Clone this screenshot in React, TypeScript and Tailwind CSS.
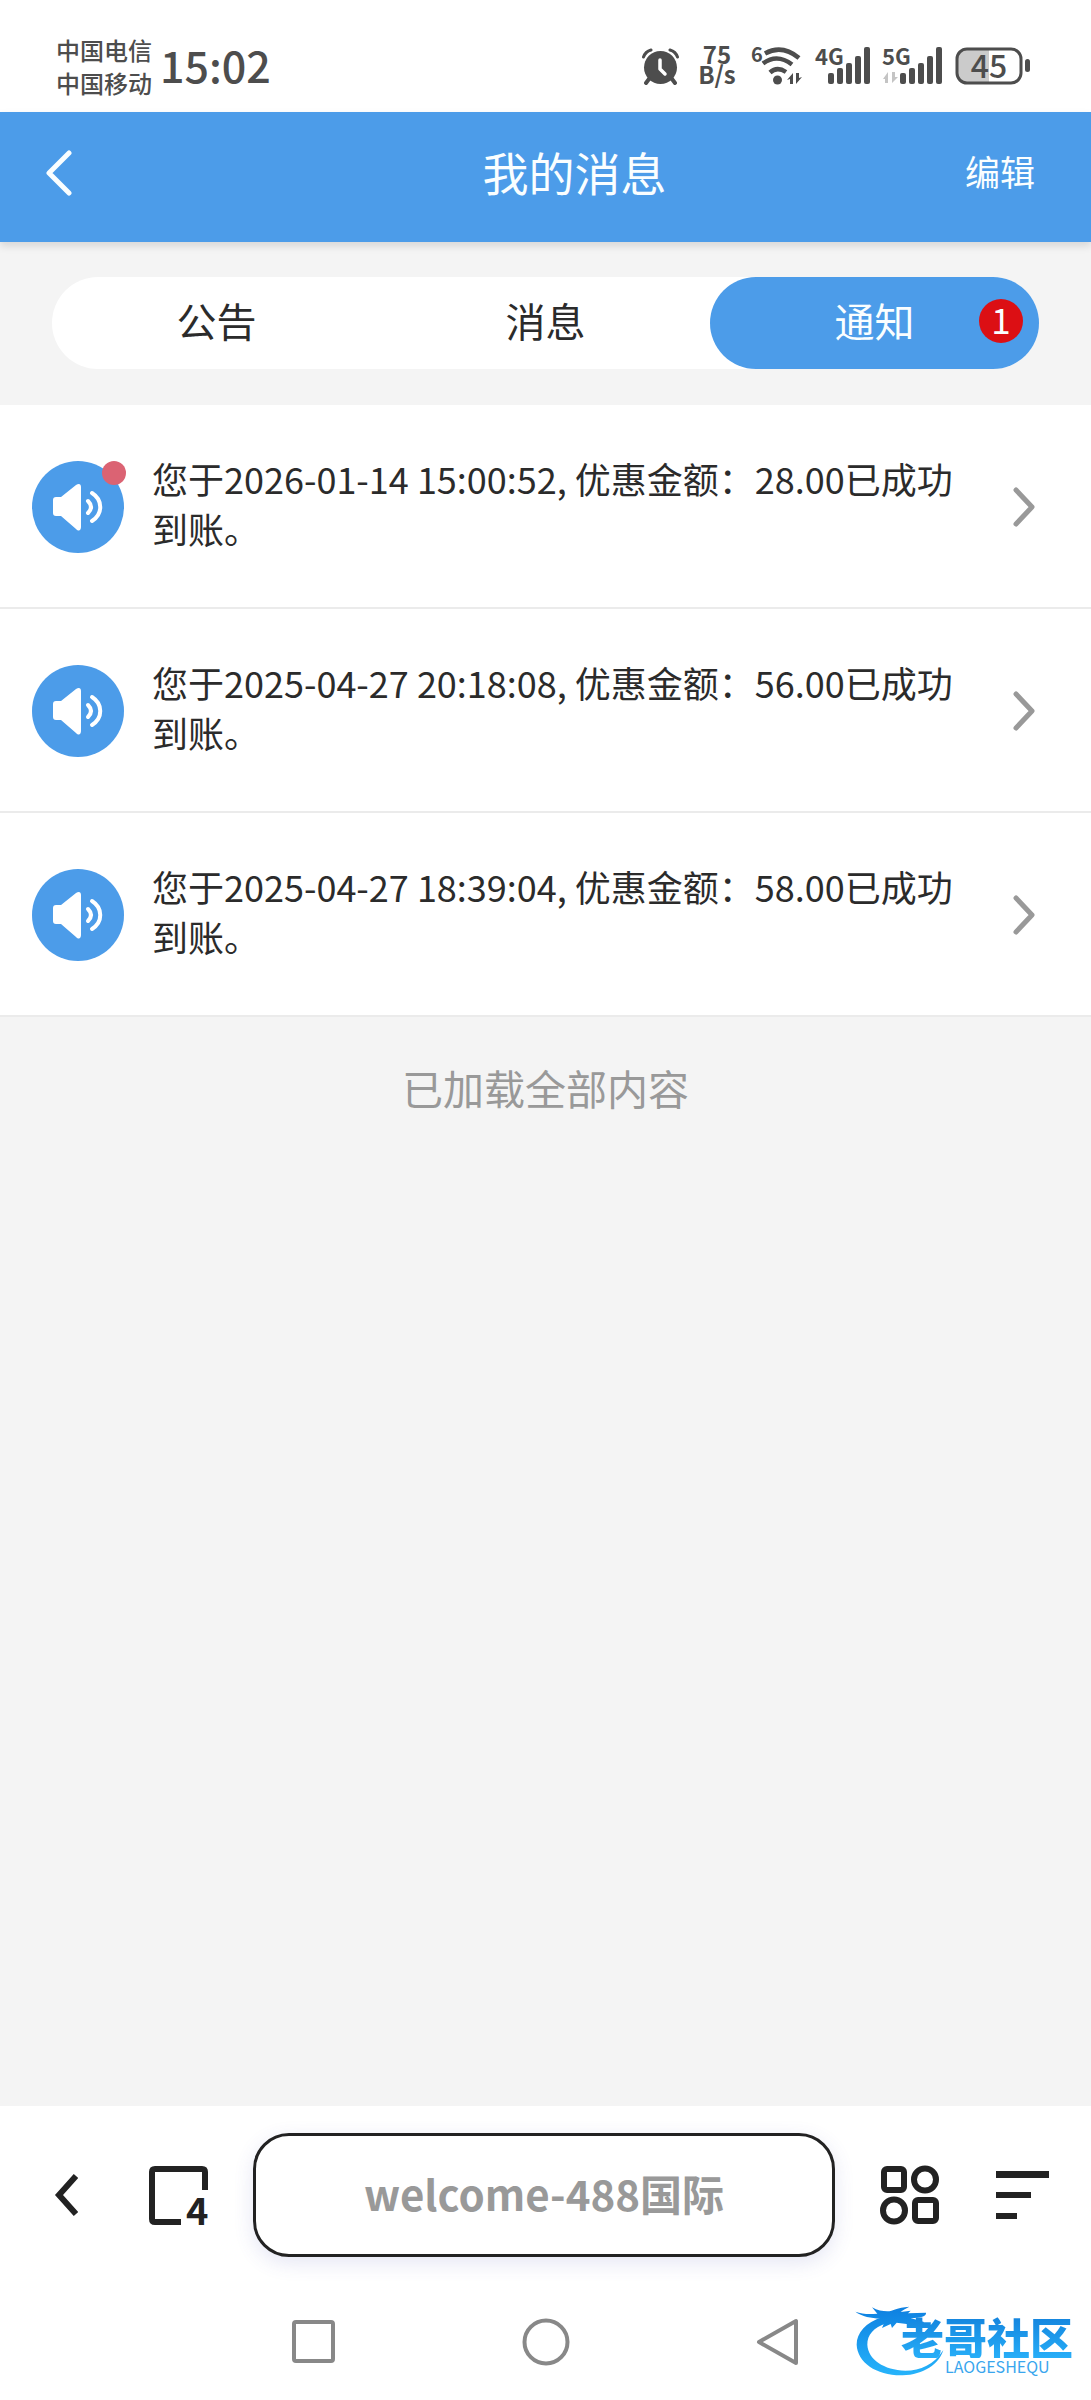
import React from "react";

const BARS = [
  { x: 0, h: 11 },
  { x: 9, h: 16 },
  { x: 18, h: 21 },
  { x: 27, h: 28 },
  { x: 36, h: 37 },
];

const MESSAGES = [
  { id: 1, time: "2026-01-14 15:00:52", amount: "28.00", unread: true },
  { id: 2, time: "2025-04-27 20:18:08", amount: "56.00", unread: false },
  { id: 3, time: "2025-04-27 18:39:04", amount: "58.00", unread: false },
];

const TABS = [
  { label: "公告", count: 0 },
  { label: "消息", count: 0 },
  { label: "通知", count: 1 },
];

function AlarmIcon() {
  return (
    <svg width="37" height="37" viewBox="0 0 37 37" fill="none" aria-hidden="true">
      <circle cx="18.500" cy="19.500" r="16.500" fill="#4d4d4d" />
      <path d="M1.500 9A11 11 0 0 1 9 2M35.500 9A11 11 0 0 0 28 2" stroke="#4d4d4d" strokeWidth="3" strokeLinecap="round" />
      <path d="M7 31l-3 4M30 31l3 4" stroke="#4d4d4d" strokeWidth="4" strokeLinecap="round" />
      <path d="M18 12v9l5 5" stroke="#fff" strokeWidth="3.500" strokeLinecap="round" strokeLinejoin="round" />
    </svg>
  );
}

function WifiIcon() {
  return (
    <svg width="52" height="40" viewBox="0 0 52 40" fill="none" className="overflow-visible" aria-hidden="true">
      <text x="0" y="16" fontSize="20" fontWeight="700" fill="#4d4d4d">6</text>
      <g stroke="#4d4d4d" strokeWidth="4.500">
        <path d="M14 7.500Q31 -2 48 12" />
        <path d="M12 17.500Q26 7 41 18.500" />
        <path d="M19 26.500Q26 20 35 26" />
      </g>
      <circle cx="26.500" cy="34" r="4.500" fill="#4d4d4d" />
      <path d="M36 34l6-7v11h-3v-5zM51 31l-6 7V27h3v5z" fill="#4d4d4d" />
    </svg>
  );
}

function SignalIcon({ label, idle }: { label: string; idle: boolean }) {
  const left = idle ? 18 : 13;
  return (
    <svg width={left + 43} height="40" viewBox={`0 0 ${left + 43} 40`} className="overflow-visible" aria-hidden="true">
      <text x="0" y="19" fontSize="22" fontWeight="700" fill="#4d4d4d">{label}</text>
      {idle && <path d="M1 33l5-7v11h-3v-4zM16 31l-6 6V26h3v5z" fill="#c4c4c4" />}
      {BARS.map((b) => (
        <rect key={b.x} x={left + b.x} y={38 - b.h} width="6" height={b.h} rx="2" fill="#4d4d4d" />
      ))}
    </svg>
  );
}

function BatteryIcon() {
  return (
    <svg width="76" height="38" viewBox="0 0 76 38" className="overflow-visible" aria-hidden="true">
      <path d="M12 2H34V36H12A10 10 0 0 1 2 26V12A10 10 0 0 1 12 2Z" fill="#cbcbcb" />
      <rect x="2" y="2" width="64" height="34" rx="10" fill="none" stroke="#4d4d4d" strokeWidth="3" />
      <rect x="70" y="12" width="5" height="13" rx="2.500" fill="#4d4d4d" />
      <text x="34" y="31" fontSize="32" fontWeight="500" textAnchor="middle" fill="#4d4d4d">45</text>
    </svg>
  );
}

function SpeakerIcon() {
  return (
    <svg width="92" height="92" viewBox="0 0 92 92" fill="none" aria-hidden="true">
      <circle cx="46" cy="46" r="46" fill="#4c9ce9" />
      <path d="M24 36h5L44 24c3-2 5-1 5 2v40c0 3-2 5-5 2L29 55h-5c-2 0-3-1-3-3V39c0-2 1-3 3-3Z" fill="#fff" />
      <path d="M56 40q6 6 0 12" stroke="#fff" strokeWidth="4" strokeLinecap="round" />
      <path d="M60 32c11 7 11 21 0 28" stroke="#fff" strokeWidth="4" strokeLinecap="round" />
    </svg>
  );
}

function DragonLogo() {
  return (
    <svg width="90" height="72" viewBox="9 10 270 216" fill="none" aria-hidden="true">
      <defs>
        <linearGradient id="dragon" x1="0" y1="10" x2="0" y2="220" gradientUnits="userSpaceOnUse">
          <stop stopColor="#0d7fe0" />
          <stop offset="1" stopColor="#27b4fb" />
        </linearGradient>
      </defs>
      <g fill="url(#dragon)">
        <path d="M92 44C40 58 14 92 14 126C16 180 76 220 152 218C214 216 262 184 274 142C246 186 206 204 160 204C96 202 48 170 46 126C46 98 64 74 104 62Z" />
        <path d="M10 27C30 34 50 36 76 33L60 14C76 24 92 26 106 26C124 26 134 14 172 12C160 18 152 22 146 28L176 24L168 32L222 30C224 40 206 46 176 46L216 58C214 68 196 70 164 64L134 60L120 76L116 64L90 76L96 62L72 64L84 48C58 46 30 42 10 27Z" />
      </g>
    </svg>
  );
}

export default function App() {
  return (
    <div className="flex min-h-screen flex-col bg-[#f4f4f4] font-['Noto_Sans_CJK_SC',sans-serif] text-[#2b2b2b]">
      <div className="flex h-28 items-center justify-between bg-white pt-5 pr-[60px] pl-14 text-[#4d4d4d]">
        <div className="flex items-center gap-2">
          <div className="text-[24px] leading-[33px] font-medium">
            <p>中国电信</p>
            <p>中国移动</p>
          </div>
          <time className="pb-1 text-[43px] leading-[44px] font-medium">15:02</time>
        </div>
        <div className="flex items-center">
          <AlarmIcon />
          <div className="ml-4 w-11 pb-1 text-center text-[24px] leading-5 font-bold">
            <p>75</p>
            <p>B/s</p>
          </div>
          <div className="ml-3 flex items-center gap-3">
            <WifiIcon />
            <div className="flex gap-[11px]">
              <SignalIcon label="4G" idle={false} />
              <SignalIcon label="5G" idle={true} />
            </div>
            <BatteryIcon />
          </div>
        </div>
      </div>

      <header className="relative z-10 flex h-[130px] items-center bg-[#4c9ce9] pr-14 pb-2 pl-[46px] text-[#fafeff] shadow-[0_4px_8px_rgba(0,0,0,0.12)]">
        <button type="button" aria-label="返回" className="flex w-[138px]">
          <svg width="26" height="46" viewBox="0 0 26 46" fill="none" stroke="currentColor" strokeWidth="5" strokeLinecap="round" strokeLinejoin="round">
            <path d="M23 3L3 23L23 43" />
          </svg>
        </button>
        <h1 className="flex-1 pb-1 text-center text-[46px] leading-[60px]">我的消息</h1>
        <button type="button" className="pb-1 text-[35px] leading-[50px]">编辑</button>
      </header>

      <div className="px-[52px] pt-[35px] pb-9">
        <div role="tablist" className="grid grid-cols-3 rounded-full bg-white">
          {TABS.map((t) => (
            <button
              key={t.label}
              type="button"
              role="tab"
              aria-selected={t.count > 0}
              className="relative h-[92px] rounded-full pb-1.5 text-[40px] leading-[60px] aria-selected:bg-[#4c9ce9] aria-selected:text-[#fafeff]"
            >
              {t.label}
              {t.count > 0 && (
                <span className="absolute top-[22px] right-4 size-11 rounded-full bg-[#dc0f14] text-center text-[35px] leading-10">
                  {t.count}
                </span>
              )}
            </button>
          ))}
        </div>
      </div>

      <ul>
        {MESSAGES.map((m) => (
          <li key={m.id} className="border-b-2 border-[#ebebeb] bg-white">
            <a href="#" className="flex h-[202px] items-center pt-0.5 pr-14 pl-8">
              <span className="relative mr-7">
                <SpeakerIcon />
                {m.unread && <span className="absolute top-0 -right-0.5 size-6 rounded-full bg-[#db6373]" />}
              </span>
              <p className="mr-11 flex-1 pb-2 text-[36px] leading-[50px]">
                {`您于${m.time}, 优惠金额：${m.amount}已成功到账。`}
              </p>
              <svg width="22" height="40" viewBox="0 0 22 40" fill="none" stroke="#999" strokeWidth="5" strokeLinecap="round" strokeLinejoin="round" aria-hidden="true">
                <path d="M3 3L19 20L3 37" />
              </svg>
            </a>
          </li>
        ))}
      </ul>

      <p className="pt-10 text-center text-[41px] leading-[60px] text-[#999]">已加载全部内容</p>

      <footer className="mt-auto bg-white">
        <div className="flex items-center py-[27px] pr-[42px] pl-[54px] text-[#222]">
          <button type="button" aria-label="后退" className="mr-[71px]">
            <svg width="24" height="42" viewBox="0 0 24 42" fill="none" stroke="currentColor" strokeWidth="6">
              <path d="M22 2L5 21L22 40" />
            </svg>
          </button>
          <button type="button" aria-label="标签页" className="mr-11">
            <svg width="60" height="60" viewBox="0 0 60 60" fill="none" className="overflow-visible">
              <path d="M56 25V7Q56 4 53 4H6Q3 4 3 7V54Q3 57 6 57H32" stroke="currentColor" strokeWidth="6" />
              <text x="37" y="60" fontSize="38" fontWeight="700" fill="currentColor">4</text>
            </svg>
          </button>
          <button
            type="button"
            className="h-[124px] flex-1 rounded-[36px] border-[3px] border-[#222] pb-1 text-[42px] leading-[60px] font-bold text-[#999] shadow-[0_6px_20px_rgba(70,80,180,0.14)]"
          >
            welcome-488国际
          </button>
          <button type="button" aria-label="应用" className="mr-14 ml-[45px]">
            <svg width="60" height="60" viewBox="0 0 60 60" fill="none" stroke="currentColor" strokeWidth="6">
              <rect x="4" y="4" width="20" height="21" rx="3" />
              <circle cx="45" cy="14.500" r="11" />
              <circle cx="14" cy="45.500" r="11" />
              <rect x="35" y="35" width="21" height="21" rx="3" />
            </svg>
          </button>
          <button type="button" aria-label="菜单">
            <svg width="53" height="48" viewBox="0 0 53 48" fill="currentColor">
              <rect width="53" height="7" />
              <rect y="21" width="35" height="6" />
              <rect y="42" width="21" height="6" />
            </svg>
          </button>
        </div>

        <nav className="relative flex h-[116px] items-center justify-center gap-[184px]">
          <button type="button" aria-label="最近任务">
            <svg width="48" height="48" viewBox="0 0 48 48" fill="none" stroke="#888" strokeWidth="4">
              <rect x="4" y="4" width="39" height="39" rx="2" />
            </svg>
          </button>
          <button type="button" aria-label="主屏幕">
            <svg width="48" height="48" viewBox="0 0 48 48" fill="none" stroke="#888" strokeWidth="4">
              <circle cx="24" cy="24" r="21.500" />
            </svg>
          </button>
          <button type="button" aria-label="返回上一页">
            <svg width="48" height="48" viewBox="0 0 48 48" fill="none" stroke="#888" strokeWidth="4" strokeLinejoin="round">
              <path d="M42 3V45L5 24Z" />
            </svg>
          </button>
          <div className="absolute top-[22px] right-[18px] flex">
            <DragonLogo />
            <div className="-ml-11 pt-2">
              <p className="bg-linear-to-b from-[#1482dc] to-[#27aef8] bg-clip-text text-[43px] leading-[44px] font-black text-transparent">老哥社区</p>
              <p className="pl-11 text-[16px] leading-4 text-[#3aa6ee]">LAOGESHEQU</p>
            </div>
          </div>
        </nav>
      </footer>
    </div>
  );
}
